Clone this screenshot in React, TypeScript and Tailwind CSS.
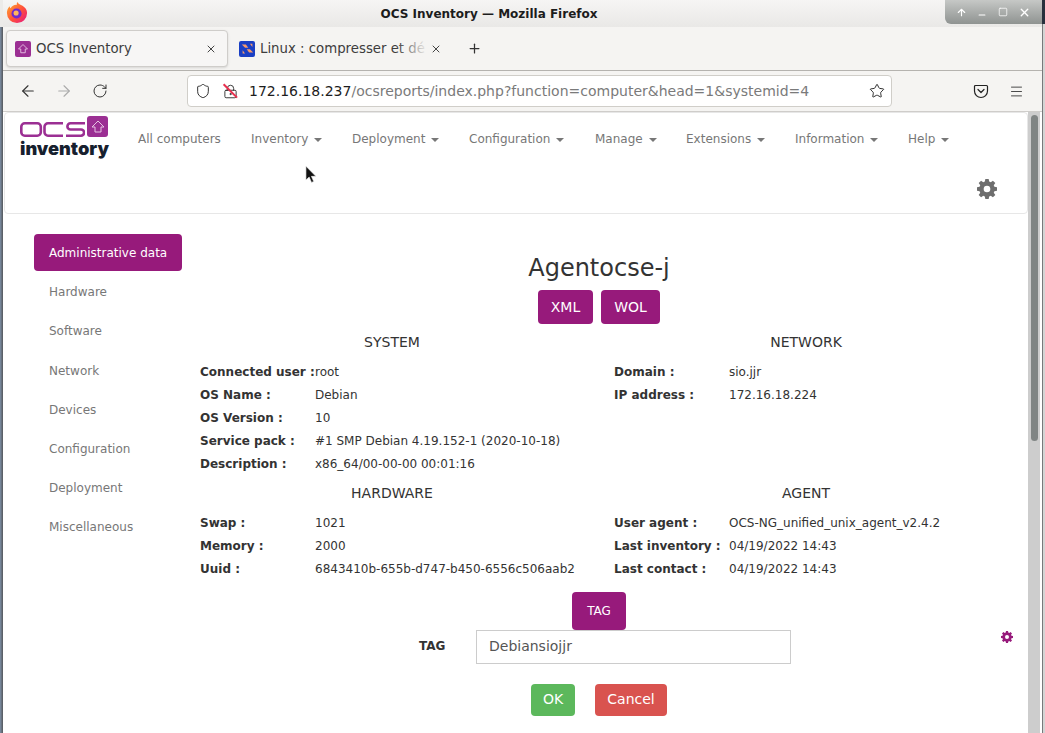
import React from 'react';
import { ArrowLeft, ArrowRight, RotateCw, Shield, LockKeyhole, Star, Menu, X, Plus, ArrowUp, Minus, Square } from 'lucide-react';

const font = { fontFamily: '"DejaVu Sans", sans-serif' };

const GearIcon: React.FC<{ className?: string }> = ({ className }) => (
    <svg viewBox="0 0 24 24" className={className} fill="currentColor">
        <path fillRule="evenodd" d="M10 1h4l.6 3.1 1.9.8L19.1 3 22 5.900l-1.900 2.600.8 1.900L24 11v4l-3.100.6-.8 1.900 1.900 2.600L19.100 23l-2.600-1.900-1.900.8L14 25h-4l-.6-3.100-1.900-.8L4.900 23 2 20.100l1.900-2.600-.8-1.900L0 15v-4l3.100-.6.8-1.900L2 5.900 4.900 3l2.600 1.900 1.900-.8L10 1zm2 8a4 4 0 1 0 0 8 4 4 0 0 0 0-8z" transform="translate(0 -1)" />
    </svg>
);

const FirefoxLogo = () => (
    <svg viewBox="0 0 24 24" className="w-[22px] h-[22px]">
        <defs>
            <linearGradient id="ff" x1="0" y1="0" x2="1" y2="1">
                <stop offset="0" stopColor="#ffb02e" />
                <stop offset="0.55" stopColor="#ff4f3a" />
                <stop offset="1" stopColor="#e31587" />
            </linearGradient>
        </defs>
        <path d="M12 23a11 11 0 0 1-11-11c0-3 1-5.500 3-7.500 0 1 .4 1.800 1 2.200C6.500 4 9.500 2.500 12 3c-.5-1-.2-2 .8-3 .6 2.500 2.800 2.800 5.200 4 3 1.900 5 4.500 5 8a11 11 0 0 1-11 11z" fill="url(#ff)" />
        <circle cx="11.500" cy="12.500" r="5.500" fill="#6e2bd0" />
        <circle cx="11" cy="12" r="2.800" fill="#ffb65c" />
    </svg>
);

const PocketIcon = () => (
    <svg viewBox="0 0 16 16" className="w-[16px] h-[16px]" fill="none" stroke="#222" strokeWidth="1.200">
        <path d="M2.500 2.500h11a1 1 0 0 1 1 1V8a6.500 6.500 0 0 1-13 0V3.500a1 1 0 0 1 1-1z" />
        <path d="M5 6.500 8 9.500l3-3" strokeLinecap="round" strokeLinejoin="round" />
    </svg>
);

const OcsLogo = () => (
    <div className="w-[90px] h-[44px] flex flex-col shrink-0">
        <div className="flex items-start h-[23px]">
            <svg viewBox="0 0 65 15" className="w-[65px] h-[15px] mt-[6px]" fill="none" stroke="#9b2f93" strokeWidth="2.600">
                <rect x="1.300" y="1.300" width="19.500" height="12.400" rx="3.500" />
                <path d="M43 1.300H28a3.500 3.500 0 0 0-3.500 3.500v5.400a3.500 3.500 0 0 0 3.500 3.500h15" />
                <path d="M65 1.300H50.500a3 3 0 0 0 0 6.200h10.500a3.100 3.100 0 0 1 0 6.200H46" />
            </svg>
            <div className="w-[21px] h-[21px] ml-[2px] bg-[#9b2f93] rounded-[3px] flex items-center justify-center">
                <svg viewBox="0 0 16 16" className="w-[16px] h-[16px]" fill="none" stroke="#e6c4e3" strokeWidth="1">
                    <path d="M8 2 14 8h-3v5H5V8H2z" />
                </svg>
            </div>
        </div>
        <div className="text-[18.200px] leading-[18px] text-[#16202e] whitespace-nowrap" style={{ fontFamily: 'Inter, sans-serif', fontWeight: 900 }}>
            inventory
        </div>
    </div>
);

const NavItem: React.FC<{ label: string; caret?: boolean; className: string }> = ({ label, caret = true, className }) => (
    <div className={`flex items-center text-[12px] text-[#777] ${className}`}>
        <span>{label}</span>
        {caret && <span className="ml-[6px] mt-[2px] w-0 h-0 border-x-[4px] border-x-transparent border-t-[4px] border-t-[#777]" />}
    </div>
);

const InfoRow: React.FC<{ label: string; value: string }> = ({ label, value }) => (
    <div className="flex h-[23px] items-center text-[12px] text-[#333]">
        <span className="w-[115px] shrink-0 font-bold whitespace-nowrap">{label}</span>
        <span className="whitespace-nowrap">{value}</span>
    </div>
);

const InfoBlock: React.FC<{ title: string; rows: [string, string][] }> = ({ title, rows }) => (
    <div className="w-[414px] px-[15px]">
        <div className="text-center text-[14px] text-[#333] h-[18px] leading-[18px] mb-[9px]">{title}</div>
        {rows.map(([label, value]) => (
            <InfoRow key={label} label={label} value={value} />
        ))}
    </div>
);

const sideItems = ['Hardware', 'Software', 'Network', 'Devices', 'Configuration', 'Deployment', 'Miscellaneous'];

export default function App() {
    return (
        <div className="w-[1045px] h-[733px] overflow-hidden bg-white flex relative" style={font}>
            {/* window frame, left */}
            <div className="w-[3px] shrink-0 flex flex-col">
                <div className="h-[27px] bg-[#ecebe9]" />
                <div className="flex-1 bg-gradient-to-r from-[#7d8fa6] to-[#55585c]" />
            </div>
            <div className="w-[1039px] shrink-0 flex flex-col">
                {/* title bar */}
                <div className="h-[27px] shrink-0 bg-gradient-to-b from-[#f6f5f4] to-[#e9e8e6] flex items-center justify-center relative pr-[67px]">
                    <span className="text-[12px] font-bold text-[#1c1c1c]">OCS Inventory — Mozilla Firefox</span>
                    <div className="absolute left-[3px] top-[2px]"><FirefoxLogo /></div>
                    <div className="absolute right-0 top-0 w-[97px] h-[24px] rounded-bl-[6px] bg-gradient-to-b from-[#c6c8c6] to-[#8f9391] flex items-center justify-around px-[6px] text-white">
                        <ArrowUp size={11} strokeWidth={2.500} />
                        <Minus size={10} strokeWidth={2.500} className="mt-[5px]" />
                        <Square size={10} strokeWidth={1.800} />
                        <X size={13} strokeWidth={2.500} />
                    </div>
                </div>
                {/* tabs */}
                <div className="h-[44px] shrink-0 bg-[#f5f4f2] border-b border-[#b5b3af] flex items-center pl-[3px]">
                    <div className="w-[222px] h-[37px] bg-[#f7f6f5] border border-[#cfcdca] rounded-[4px] shadow-sm flex items-center pl-[8px] pr-[10px]">
                        <div className="w-[16px] h-[16px] bg-[#9b2f93] rounded-[2px] flex items-center justify-center">
                            <svg viewBox="0 0 16 16" className="w-[12px] h-[12px]" fill="none" stroke="#e6c4e3" strokeWidth="1.200">
                                <path d="M8 2 14 8h-3v5H5V8H2z" />
                            </svg>
                        </div>
                        <span className="ml-[5px] pt-[1px] text-[13.300px] text-[#3d3d3d]">OCS Inventory</span>
                        <X size={12} className="ml-auto text-[#444]" />
                    </div>
                    <div className="w-[218px] h-[37px] flex items-center pl-[11px] relative">
                        <div className="w-[16px] h-[16px] bg-[#1a3fc4] rounded-[2px] flex items-center justify-center">
                            <svg viewBox="0 0 16 16" className="w-[13px] h-[13px]">
                                <path d="M1 3h5l3 4H5zM15 13h-5L7 9h4zM11 2h3v4zM2 14v-4l3 4z" fill="#f59a6c" />
                            </svg>
                        </div>
                        <span className="ml-[5px] pt-[1px] text-[13.300px] text-[#3d3d3d] w-[168px] overflow-x-clip whitespace-nowrap">Linux : compresser et dé</span>
                        <div className="absolute left-[168px] w-[32px] h-[20px] bg-gradient-to-r from-transparent to-[#f5f4f2]" />
                        <X size={12} className="absolute left-[202px] text-[#444]" />
                    </div>
                    <Plus size={15} className="ml-[21px] text-[#333]" />
                </div>
                {/* toolbar */}
                <div className="h-[41px] shrink-0 bg-[#f5f4f2] border-b border-[#cfcdca] flex items-center pl-[16px] pr-[18px]">
                    <ArrowLeft size={18} strokeWidth={1.500} className="text-[#333]" />
                    <ArrowRight size={18} strokeWidth={1.500} className="ml-[18px] text-[#aaa]" />
                    <RotateCw size={16} strokeWidth={1.500} className="ml-[19px] text-[#333]" />
                    <div className="ml-[79px] w-[705px] h-[32px] shrink-0 bg-white border border-[#d0cec9] rounded-[4px] flex items-center pl-[7px] pr-[6px]">
                        <Shield size={16} strokeWidth={1.400} className="text-[#222]" />
                        <span className="ml-[11px] relative w-[16px] h-[16px] flex items-center justify-center">
                            <LockKeyhole size={15} strokeWidth={1.400} className="text-[#222]" />
                            <span className="absolute left-[-1px] top-[7px] w-[19px] h-[1.500px] bg-[#e8304f] rotate-45" />
                        </span>
                        <span className="ml-[11px] text-[14px] whitespace-nowrap text-[#7a7a7a]">
                            <span className="text-[#1d1d1d]">172.16.18.237</span>/ocsreports/index.php?function=computer&amp;head=1&amp;systemid=4
                        </span>
                        <Star size={16} strokeWidth={1.400} className="ml-auto text-[#222]" />
                    </div>
                    <div className="ml-auto flex items-center gap-[20px]">
                        <PocketIcon />
                        <Menu size={15} strokeWidth={1.300} className="text-[#222]" />
                    </div>
                </div>
                {/* page */}
                <div className="flex-1 min-h-0 flex bg-white pl-[1px]">
                    <div className="w-[1024px] shrink-0 flex flex-col">
                        <div className="h-[102px] shrink-0 border border-[#e7e7e7] rounded-[4px] relative flex items-start pl-[15px] pt-[3px]">
                            <OcsLogo />
                            <div className="flex items-center h-[46px] ml-[28px]">
                                <NavItem label="All computers" caret={false} className="w-[113px]" />
                                <NavItem label="Inventory" className="w-[101px]" />
                                <NavItem label="Deployment" className="w-[117px]" />
                                <NavItem label="Configuration" className="w-[126px]" />
                                <NavItem label="Manage" className="w-[91px]" />
                                <NavItem label="Extensions" className="w-[109px]" />
                                <NavItem label="Information" className="w-[113px]" />
                                <NavItem label="Help" className="w-[50px]" />
                            </div>
                            <GearIcon className="absolute left-[972px] top-[66px] w-[20px] h-[20px] text-[#6e6e6e]" />
                        </div>
                        <div className="flex flex-1 min-h-0 pt-[20px]">
                            <div className="w-[181px] shrink-0 pl-[30px]">
                                <div className="w-[148px] h-[37px] rounded-[4px] bg-[#971a7b] text-white text-[12px] flex items-center pl-[15px] mb-[1.700px]">
                                    Administrative data
                                </div>
                                {sideItems.map((item) => (
                                    <div key={item} className="h-[39.170px] flex items-center pl-[15px] text-[12px] text-[#777]">{item}</div>
                                ))}
                            </div>
                            <div className="w-[828px] shrink-0 flex flex-col items-center">
                                <div className="h-[56px] flex items-end text-[24px] leading-[33px] text-[#333] pb-[5px]">Agentocse-j</div>
                                <div className="flex gap-[8px] h-[34px]">
                                    <div className="w-[55px] rounded-[4px] bg-[#971a7b] text-white text-[14px] flex items-center justify-center">XML</div>
                                    <div className="w-[59px] rounded-[4px] bg-[#971a7b] text-white text-[14px] flex items-center justify-center">WOL</div>
                                </div>
                                <div className="flex w-[828px] mt-[9px]">
                                    <InfoBlock title="SYSTEM" rows={[
                                        ['Connected user :', 'root'],
                                        ['OS Name :', 'Debian'],
                                        ['OS Version :', '10'],
                                        ['Service pack :', '#1 SMP Debian 4.19.152-1 (2020-10-18)'],
                                        ['Description :', 'x86_64/00-00-00 00:01:16'],
                                    ]} />
                                    <InfoBlock title="NETWORK" rows={[
                                        ['Domain :', 'sio.jjr'],
                                        ['IP address :', '172.16.18.224'],
                                    ]} />
                                </div>
                                <div className="flex w-[828px] mt-[9px]">
                                    <InfoBlock title="HARDWARE" rows={[
                                        ['Swap :', '1021'],
                                        ['Memory :', '2000'],
                                        ['Uuid :', '6843410b-655b-d747-b450-6556c506aab2'],
                                    ]} />
                                    <InfoBlock title="AGENT" rows={[
                                        ['User agent :', 'OCS-NG_unified_unix_agent_v2.4.2'],
                                        ['Last inventory :', '04/19/2022 14:43'],
                                        ['Last contact :', '04/19/2022 14:43'],
                                    ]} />
                                </div>
                                <div className="w-[54px] h-[38px] mt-[12px] rounded-[4px] bg-[#971a7b] text-white text-[12px] flex items-center justify-center">TAG</div>
                                <div className="w-[828px] flex items-start h-[34px] relative">
                                    <span className="ml-[234px] w-[57px] mt-[8px] text-[12px] leading-[16px] font-bold text-[#333]">TAG</span>
                                    <div className="w-[315px] h-[34px] border border-[#ccc] flex items-center pl-[12px] pb-[2px] text-[14px] text-[#555]">Debiansiojjr</div>
                                    <GearIcon className="absolute left-[816px] top-[1px] w-[12px] h-[12px] text-[#971a7b]" />
                                </div>
                                <div className="flex gap-[20px] mt-[20px] h-[32px]">
                                    <div className="w-[44px] rounded-[4px] bg-[#5cb85c] text-white text-[14px] flex items-center justify-center pb-[2px]">OK</div>
                                    <div className="w-[72px] rounded-[4px] bg-[#d9534f] text-white text-[14px] flex items-center justify-center pb-[2px]">Cancel</div>
                                </div>
                            </div>
                        </div>
                    </div>
                    {/* scrollbar */}
                    <div className="w-[12px] shrink-0 bg-[#cdcdcd] flex justify-center pt-[3px]">
                        <div className="w-[7px] h-[326px] rounded-full bg-[#808584]" />
                    </div>
                </div>
            </div>
            {/* window frame, right */}
            <div className="w-[3px] shrink-0 flex flex-col">
                <div className="h-[24px] bg-[#27303d]" />
                <div className="flex-1 bg-[#d4d4d4] border-l border-[#77797b]" />
            </div>
            {/* mouse pointer */}
            <svg viewBox="0 0 14 20" className="absolute left-[305px] top-[165px] w-[13px] h-[19px]">
                <path d="M1 1v15l3.500-3.200L7 18.500l2.400-1-2.500-5.500h4.800z" fill="#111" stroke="#eee" strokeWidth="0.700" />
            </svg>
        </div>
    );
}
